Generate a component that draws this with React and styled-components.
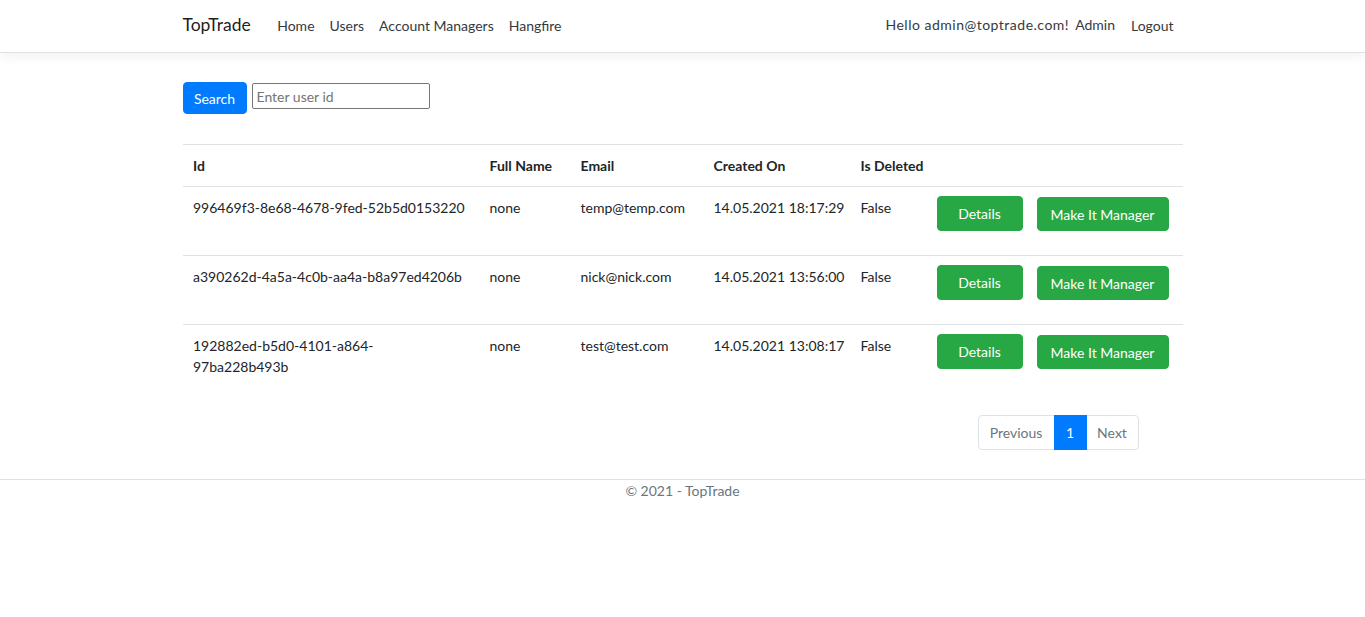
import React from "react";
import styled, { createGlobalStyle } from "styled-components";

const Global = createGlobalStyle`
  html, body { margin: 0; padding: 0; background: #fff; }
  body {
    font-family: "Segoe UI", Lato, "Noto Sans", sans-serif;
    font-size: 14px;
    line-height: 1.5;
    color: #212529;
  }
  * { box-sizing: border-box; }
`;

const Header = styled.header`
  height: 53px;
  border-bottom: 1px solid #dee2e6;
  box-shadow: 0 3.5px 10.5px rgba(0, 0, 0, 0.05);
`;

const Container = styled.div`
  width: 1000px;
  margin: 0 auto;
`;

const NavBar = styled(Container)`
  height: 52px;
  display: flex;
  align-items: center;
`;

const Brand = styled.a`
  font-size: 17.5px;
  color: rgba(0, 0, 0, 0.9);
  margin-right: 19px;
  text-decoration: none;
  line-height: 26px;
  margin-top: -2px;
`;

const NavList = styled.nav`
  display: flex;
  align-items: center;
  flex: 1;
`;

const NavLink = styled.a`
  color: #343a40;
  padding: 0 ${(p) => p.$pr || "7.5px"} 0 ${(p) => p.$pl || "7.5px"};
  text-decoration: none;
  line-height: 21px;
  margin-top: ${(p) => (p.$up ? "-4px" : "-2px")};
`;

const RightNav = styled.div`
  display: flex;
  align-items: center;
  padding-right: 2px;
`;

const Hello = styled.span`
  color: #343a40;
  line-height: 21px;
  margin-top: -4px;
  letter-spacing: 0.5px;
`;

const Main = styled(Container)`
  padding-top: 29px;
`;

const SearchForm = styled.form`
  display: flex;
  align-items: flex-start;
  gap: 5px;
  margin-bottom: 30px;
`;

const Button = styled.button`
  font-family: inherit;
  font-size: 14px;
  line-height: 21px;
  color: #fff;
  background: ${(p) => p.$bg};
  border: 1px solid ${(p) => p.$bg};
  border-radius: 4px;
  padding: ${(p) => p.$pad || "5px 10.5px"};
  height: ${(p) => p.$h || "auto"};
  width: ${(p) => p.$w || "auto"};
  margin-top: ${(p) => p.$mt || "0"};
  white-space: nowrap;
  cursor: pointer;
`;

const Input = styled.input`
  font-family: inherit;
  font-size: 14px;
  width: 178px;
  height: 26px;
  margin-top: 1px;
  border: 1px solid #767676;
  border-radius: 2px;
  padding: 1px 4px;
  color: #212529;
  &::placeholder { color: #757575; }
`;

const Table = styled.table`
  width: 100%;
  border-collapse: collapse;
  table-layout: fixed;
  margin-bottom: 21px;
`;

const Th = styled.th`
  text-align: left;
  font-weight: 700;
  padding: 10px 10.5px 10px;
  border-top: 1px solid #dee2e6;
  border-bottom: 1px solid #dee2e6;
  vertical-align: bottom;
  line-height: 21px;
  white-space: nowrap;
`;

const Td = styled.td`
  padding: ${(p) => (p.$actions ? "9px" : "10px")} 10.5px 10px;
  border-top: ${(p) => (p.$first ? "none" : "1px solid #dee2e6")};
  vertical-align: top;
  line-height: 21px;
  height: 69px;
  white-space: ${(p) => (p.$wrap ? "normal" : "nowrap")};
  word-wrap: break-word;
`;

const Actions = styled.div`
  display: flex;
  align-items: flex-start;
  gap: 14px;
`;

const PagerWrap = styled.div`
  display: flex;
  justify-content: flex-end;
  padding-right: 44px;
  margin-bottom: 29px;
`;

const Pager = styled.ul`
  display: flex;
  list-style: none;
  margin: 0;
  padding: 0;
`;

const PageItem = styled.li`
  height: 35px;
  width: ${(p) => p.$w};
  justify-content: center;
  display: flex;
  align-items: center;
  border: 1px solid ${(p) => (p.$active ? "#007bff" : "#dee2e6")};
  margin-left: -1px;
  background: ${(p) => (p.$active ? "#007bff" : "#fff")};
  color: ${(p) => (p.$active ? "#fff" : "#6c757d")};
  border-radius: ${(p) => p.$radius || "0"};
  position: relative;
  z-index: ${(p) => (p.$active ? 1 : 0)};
`;

const Footer = styled.footer`
  border-top: 1px solid #dee2e6;
  text-align: center;
  color: #6c757d;
  line-height: 21px;
  padding-top: 0;
`;

const rows = [
  { id: "996469f3-8e68-4678-9fed-52b5d0153220", email: "temp@temp.com", created: "14.05.2021 18:17:29" },
  { id: "a390262d-4a5a-4c0b-aa4a-b8a97ed4206b", email: "nick@nick.com", created: "14.05.2021 13:56:00" },
  { id: "192882ed-b5d0-4101-a864-97ba228b493b", email: "test@test.com", created: "14.05.2021 13:08:17" },
];

export default function App() {
  return (
    <>
      <Global />
      <Header>
        <NavBar>
          <Brand href="#">TopTrade</Brand>
          <NavList>
            <NavLink href="#">Home</NavLink>
            <NavLink href="#">Users</NavLink>
            <NavLink href="#">Account Managers</NavLink>
            <NavLink href="#">Hangfire</NavLink>
          </NavList>
          <RightNav>
            <Hello>Hello admin@toptrade.com!</Hello>
            <NavLink href="#" $up $pl="6px" $pr="7px">Admin</NavLink>
            <NavLink href="#" $pl="9px" $pr="7px">Logout</NavLink>
          </RightNav>
        </NavBar>
      </Header>
      <Main>
        <SearchForm onSubmit={(e) => e.preventDefault()}>
          <Button $bg="#007bff" $pad="5px 10px" $h="32px" $w="64px">Search</Button>
          <Input placeholder="Enter user id" />
        </SearchForm>
        <Table>
          <colgroup>
            <col style={{ width: 296.5 }} />
            <col style={{ width: 91 }} />
            <col style={{ width: 133 }} />
            <col style={{ width: 147 }} />
            <col style={{ width: 76 }} />
            <col />
          </colgroup>
          <thead>
            <tr>
              <Th>Id</Th>
              <Th>Full Name</Th>
              <Th>Email</Th>
              <Th>Created On</Th>
              <Th>Is Deleted</Th>
              <Th></Th>
            </tr>
          </thead>
          <tbody>
            {rows.map((r, i) => (
              <tr key={r.id}>
                <Td $first={i === 0} $wrap>{r.id}</Td>
                <Td $first={i === 0}>none</Td>
                <Td $first={i === 0}>{r.email}</Td>
                <Td $first={i === 0}>{r.created}</Td>
                <Td $first={i === 0}>False</Td>
                <Td $first={i === 0} $actions>
                  <Actions>
                    <Button $bg="#28a745" $pad="6px 10px" $h="35px" $w="86px">Details</Button>
                    <Button $bg="#28a745" $pad="5px 10px" $h="34px" $w="132px" $mt="1px">Make It Manager</Button>
                  </Actions>
                </Td>
              </tr>
            ))}
          </tbody>
        </Table>
        <PagerWrap>
          <Pager>
            <PageItem $radius="4px 0 0 4px" $w="77px">Previous</PageItem>
            <PageItem $active $w="33px">1</PageItem>
            <PageItem $radius="0 4px 4px 0" $w="53px">Next</PageItem>
          </Pager>
        </PagerWrap>
      </Main>
      <Footer>© 2021 - TopTrade</Footer>
    </>
  );
}
